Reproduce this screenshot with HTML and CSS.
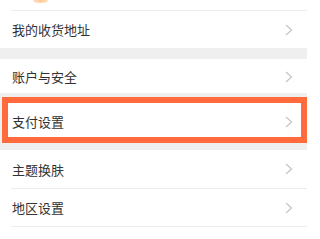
FILE: index.html
```
<!DOCTYPE html>
<html>
<head>
    <meta charset="utf-8"/>
    <meta name="viewport" content="width=device-width, initial-scale=1.0" />
    <title>设置</title>
    <link rel="stylesheet" href="styles.css">
</head>
<body>
    <div class="page">
        <div class="tail"><span class="blob"></span></div>
        <div class="group">
            <div class="item line">
                <span>我的收货地址</span>
                <svg class="arr" width="8" height="12" viewBox="0 0 8 12"><polyline points="1,1 6.5,6 1,11" /></svg>
            </div>
        </div>
        <div class="gap"></div>
        <div class="group">
            <div class="item short">
                <span>账户与安全</span>
                <svg class="arr" width="8" height="12" viewBox="0 0 8 12"><polyline points="1,1 6.5,6 1,11" /></svg>
            </div>
        </div>
        <div class="band">
            <div class="mark">
                <div class="item inner">
                    <span>支付设置</span>
                    <svg class="arr" width="8" height="12" viewBox="0 0 8 12"><polyline points="1,1 6.5,6 1,11" /></svg>
                </div>
            </div>
        </div>
        <div class="group">
            <div class="item">
                <span>主题换肤</span>
                <svg class="arr" width="8" height="12" viewBox="0 0 8 12"><polyline points="1,1 6.5,6 1,11" /></svg>
            </div>
            <div class="item line">
                <span>地区设置</span>
                <svg class="arr" width="8" height="12" viewBox="0 0 8 12"><polyline points="1,1 6.5,6 1,11" /></svg>
            </div>
            <div class="item line">
                <span>清除缓存</span>
                <svg class="arr" width="8" height="12" viewBox="0 0 8 12"><polyline points="1,1 6.5,6 1,11" /></svg>
            </div>
        </div>
    </div>
</body>
</html>
```
FILE: styles.css
```
html,body,div,p{margin: 0px;padding: 0px;}
*{box-sizing: border-box;}
body{font-family: "Noto Sans CJK SC", "Noto Sans", sans-serif;font-size: 13px;color: #333;background-color: #fff;overflow:hidden;}
.page {width:307px;}
.tail {height:10px;padding-left:33px;}
.blob {display:block;width:15px;height:3px;border-radius:0 0 8px 8px;background:radial-gradient(ellipse at 50% 0%, #ffc48a 0%, #ffdcb8 60%, #fff 100%);}
.group {background-color:#fff;}
.item {display:flex;align-items:center;justify-content:space-between;height:38px;padding:0px 14px 0px 12px;position:relative;}
.item.line {height:38px;border-top:1px solid #ececec;margin-left:11px;padding-left:1px;}
.item.short {height:34px;padding-top:1px;}
.gap {height:11px;background-color:#efefef;}
.band {background-color:#efefef;padding:4px 0px 7px 2px;}
.mark {border:6px solid #ff6b3d;background-color:#fff;}
.item.inner {height:34px;padding:3px 8px 0px 4px;}
.arr {display:block;}
.arr polyline {fill:none;stroke:#c4c4c4;stroke-width:1.2;}
```
